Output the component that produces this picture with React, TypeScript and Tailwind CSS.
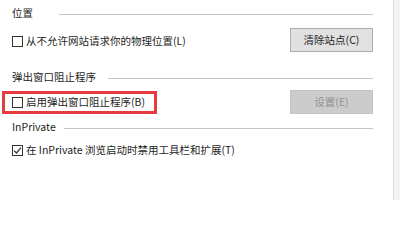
import React from "react";

const font = { fontFamily: '"Noto Sans CJK SC", "Noto Sans", sans-serif' };

function Box({ checked = false }: { checked?: boolean }) {
  return (
    <span className="w-[11px] h-[11px] border border-[#333333] bg-white flex items-center justify-center shrink-0">
      {checked && (
        <svg width="9" height="9" viewBox="0 0 9 9">
          <path d="M1 4.6 L3.5 7 L8 1.6" fill="none" stroke="#333333" strokeWidth="1.2" />
        </svg>
      )}
    </span>
  );
}

function Heading({ text, className, gap }: { text: string; className: string; gap: string }) {
  return (
    <div className={`flex items-center ${className}`}>
      <span className="text-[10.5px] leading-none text-[#1e1e1e] whitespace-nowrap">{text}</span>
      <div className={`flex-1 h-px bg-[#c4c4c4] mt-[2px] ${gap}`} />
    </div>
  );
}

export default function App() {
  return (
    <div className="w-[400px] h-[200px] bg-white flex overflow-hidden" style={font}>
      <div className="flex-1 flex flex-col pl-[12px] pr-[20px]">
        <Heading text="位置" className="h-[27px]" gap="ml-[26px]" />
        <div className="flex justify-between items-start h-[25px]">
          <div className="mt-[9px] h-[11px] flex items-center gap-[3px]">
            <Box />
            <span className="text-[10.5px] leading-none text-[#1e1e1e] whitespace-nowrap">从不允许网站请求你的物理位置(L)</span>
          </div>
          <div className="mt-px w-[83px] h-[24px] bg-[#e1e1e1] border border-[#adadad] flex items-center justify-center text-[10.5px] leading-none text-[#1e1e1e]">
            清除站点(C)
          </div>
        </div>
        <Heading text="弹出窗口阻止程序" className="mt-[12px] h-[26px]" gap="ml-[12px]" />
        <div className="flex justify-between items-start h-[24px]">
          <div className="-ml-[10px] mt-[1px] w-[155px] h-[23px] border-[3px] border-[#e53a40] flex items-center gap-[3px] pl-[7px]">
            <Box />
            <span className="text-[10.5px] leading-none text-[#1e1e1e] whitespace-nowrap">启用弹出窗口阻止程序(B)</span>
          </div>
          <div className="w-[83px] h-[24px] bg-[#cccccc] border border-[#c4c4c4] flex items-center justify-center text-[10.5px] leading-none text-[#8f8f8f]">
            设置(E)
          </div>
        </div>
        <Heading text="InPrivate" className="h-[26px]" gap="ml-[8px]" />
        <div className="mt-[5px] h-[11px] flex items-center gap-[3px]">
          <Box checked />
          <span className="text-[10.5px] leading-none text-[#1e1e1e] whitespace-nowrap">在 InPrivate 浏览启动时禁用工具栏和扩展(T)</span>
        </div>
      </div>
      <div className="w-[7px] h-full border-l border-[#dedede] bg-[#f3f3f3]" />
    </div>
  );
}
